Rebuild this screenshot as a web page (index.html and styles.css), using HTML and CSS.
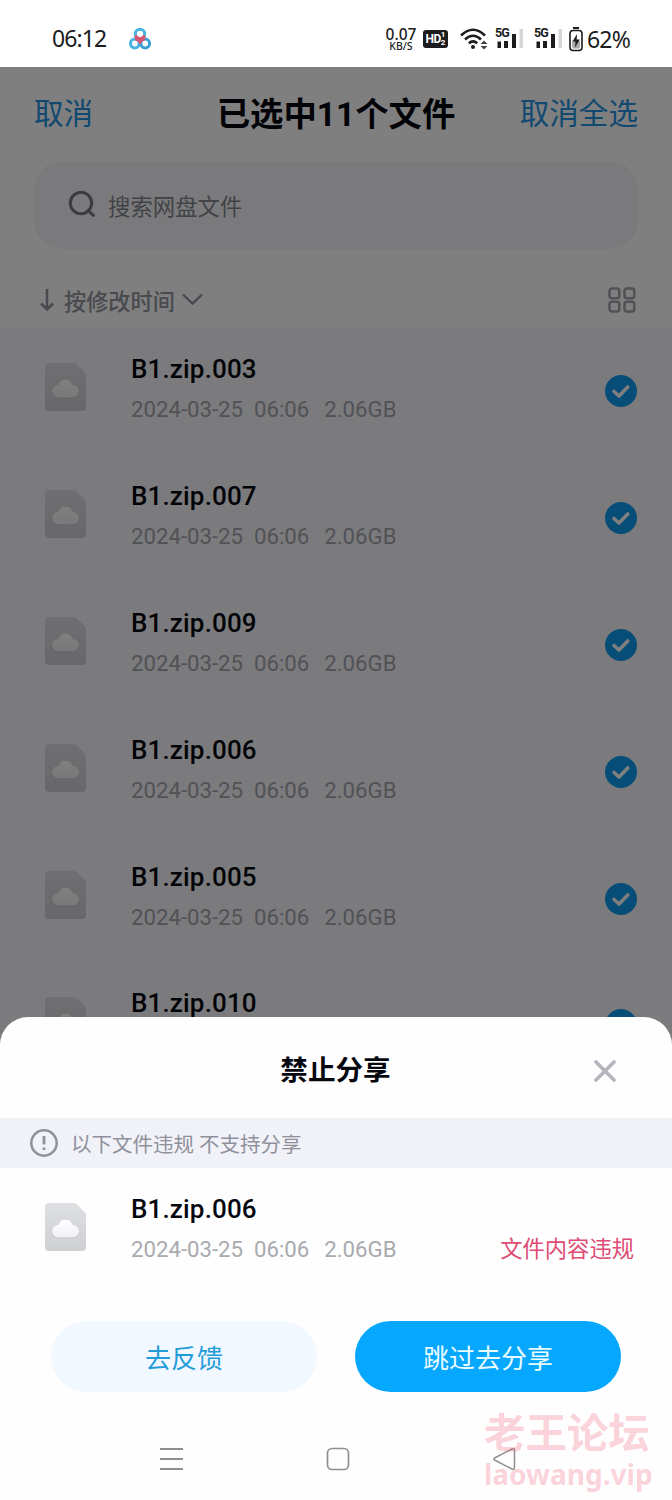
FILE: index.html
```html
<!DOCTYPE html>
<html lang="zh-CN">
<head>
    <meta charset="UTF-8">
    <meta name="viewport" content="width=device-width,initial-scale=1.0">
    <title>禁止分享</title>
    <link rel="stylesheet" href="styles.css">
</head>
<body>
    <!-- shared icons -->
    <svg class="defs" width="0" height="0">
        <defs>
            <linearGradient id="paper" x1="0" y1="0" x2="0" y2="1">
                <stop offset="0" stop-color="#dedfe2"/>
                <stop offset="1" stop-color="#cfd0d4"/>
            </linearGradient>
            <linearGradient id="cloud" x1="0" y1="0" x2="0" y2="1">
                <stop offset="0" stop-color="#ffffff"/>
                <stop offset="1" stop-color="#f0f1f5"/>
            </linearGradient>
            <symbol id="file" viewBox="0 0 41 48">
                <path d="M4 0H29Q30.500 0 31.500 1L40 9.500Q41 10.500 41 12V44Q41 48 37 48H4Q0 48 0 44V4Q0 0 4 0Z" fill="url(#paper)"/>
                <path d="M12.500 35.500A6.300 6.300 0 0 1 13.500 22.800A7.300 7.300 0 0 1 27.500 22.800A6.300 6.300 0 0 1 28 35.500Z" fill="#c2c3c8"/>
                <path d="M13 34.500A6.200 6.200 0 0 1 13.500 22A7.300 7.300 0 0 1 27.500 22A6.200 6.200 0 0 1 28 34.500Z" fill="url(#cloud)"/>
            </symbol>
            <symbol id="check" viewBox="0 0 32 32">
                <circle cx="16" cy="16" r="16" fill="#0c9bee"/>
                <path d="M9 16.500L14 21L22.800 12" fill="none" stroke="#fff" stroke-width="3.600" stroke-linecap="round" stroke-linejoin="round"/>
            </symbol>
        </defs>
    </svg>

    <div class="phone">
        <div class="status">
            <span class="clock">06:12</span>
            <svg class="app-logo" width="24" height="24" viewBox="0 0 24 24" fill="none" stroke-width="3">
                <circle cx="6.800" cy="16.500" r="4.400" stroke="#48b4e0"/>
                <circle cx="17.200" cy="16.500" r="4.400" stroke="#3b9fd3"/>
                <path d="M7 12Q10 12 12 15Q14 12 17 12" stroke="#dd5573"/>
                <circle cx="12" cy="7" r="4.700" stroke="#48b4e0"/>
                <path d="M7.500 8.500Q8.500 11.700 12 11.700T16.500 8.500" stroke="#dd5573"/>
            </svg>
            <div class="indicators">
                <div class="speed"><span>0.07</span><small>KB/S</small></div>
                <div class="hd"><b>HD</b><i><em>1</em><em>2</em></i></div>
                <svg class="wifi" width="28" height="22" viewBox="0 0 28 22" fill="none" stroke="#1c1c1e" stroke-width="2.600">
                    <path d="M1 7.500Q13 -4 25 7.500M5 11.500Q13 4 21 11.500M8.800 15.300Q13 11.500 17.200 15.300"/>
                    <circle cx="13" cy="19" r="2" fill="#1c1c1e" stroke="none"/>
                    <path d="M24 12.500L27.500 16H20.500ZM24 21.500L20.500 18H27.500Z" fill="#444" stroke="none"/>
                </svg>
                <div class="signal">
                    <b>5G</b>
                    <svg width="28" height="20" viewBox="0 0 28 20"><path d="M2.500 12.500H6V19H2.500ZM9 12H13V19H9ZM17 5H21V19H17Z" fill="#1c1c1e"/><path d="M24.500 0H28V19H24.500Z" fill="#d6d6d6"/></svg>
                </div>
                <div class="signal">
                    <b>5G</b>
                    <svg width="28" height="20" viewBox="0 0 28 20"><path d="M2.500 12.500H6V19H2.500ZM9 12H13V19H9ZM17 5H21V19H17Z" fill="#1c1c1e"/><path d="M24.500 0H28V19H24.500Z" fill="#d6d6d6"/></svg>
                </div>
                <svg class="battery" width="14" height="25" viewBox="0 0 14 25">
                    <path d="M4 1H10" stroke="#1c1c1e" stroke-width="2"/>
                    <rect x="1" y="3.500" width="12" height="20" rx="3" fill="#fff" stroke="#1c1c1e" stroke-width="1.600"/>
                    <path d="M3 14H11V19Q11 21.500 9 21.500H5Q3 21.500 3 19Z" fill="#aaa"/>
                    <path d="M8 7L3.500 14.500H6.500L6 20.500L10.800 12.500H7.700Z" fill="#1c1c1e"/>
                </svg>
                <span class="percent">62%</span>
            </div>
        </div>

        <div class="app">
            <header>
                <a class="cancel">取消</a>
                <h1>已选中11个文件</h1>
                <a class="cancel">取消全选</a>
            </header>
            <div class="search">
                <svg width="28" height="28" viewBox="0 0 28 28" fill="none" stroke="#777980" stroke-width="3">
                    <circle cx="13" cy="12" r="10.700"/>
                    <path d="M20 19.500L25.500 24.500" stroke-linecap="round"/>
                </svg>
                <span>搜索网盘文件</span>
            </div>
            <div class="sort">
                <svg width="14" height="22" viewBox="0 0 14 22" fill="none" stroke="#92949e" stroke-width="2.600">
                    <path d="M7 0V20M1 14.500L7 20.500L13 14.500"/>
                </svg>
                <span>按修改时间</span>
                <svg width="21" height="13" viewBox="0 0 21 13" fill="none" stroke="#92949e" stroke-width="2.400">
                    <path d="M1 1.500L10.500 10.500L20 1.500"/>
                </svg>
                <svg class="grid" width="28" height="26" viewBox="0 0 28 26" fill="none" stroke="#a3a4ac" stroke-width="2.600">
                    <rect x="1.500" y="1.500" width="9.800" height="9.800" rx="2.500"/>
                    <rect x="16.500" y="1.500" width="9.800" height="9.800" rx="2.500"/>
                    <rect x="1.500" y="14.700" width="9.800" height="9.800" rx="2.500"/>
                    <rect x="16.500" y="14.700" width="9.800" height="9.800" rx="2.500"/>
                </svg>
            </div>
            <ul class="list">
                <li class="file">
                    <svg class="file-icon"><use href="#file"/></svg>
                    <div class="info"><h3>B1.zip.003</h3><p><span>2024-03-25</span><span>06:06</span><span>2.06GB</span></p></div>
                    <svg class="check"><use href="#check"/></svg>
                </li>
                <li class="file">
                    <svg class="file-icon"><use href="#file"/></svg>
                    <div class="info"><h3>B1.zip.007</h3><p><span>2024-03-25</span><span>06:06</span><span>2.06GB</span></p></div>
                    <svg class="check"><use href="#check"/></svg>
                </li>
                <li class="file">
                    <svg class="file-icon"><use href="#file"/></svg>
                    <div class="info"><h3>B1.zip.009</h3><p><span>2024-03-25</span><span>06:06</span><span>2.06GB</span></p></div>
                    <svg class="check"><use href="#check"/></svg>
                </li>
                <li class="file">
                    <svg class="file-icon"><use href="#file"/></svg>
                    <div class="info"><h3>B1.zip.006</h3><p><span>2024-03-25</span><span>06:06</span><span>2.06GB</span></p></div>
                    <svg class="check"><use href="#check"/></svg>
                </li>
                <li class="file">
                    <svg class="file-icon"><use href="#file"/></svg>
                    <div class="info"><h3>B1.zip.005</h3><p><span>2024-03-25</span><span>06:06</span><span>2.06GB</span></p></div>
                    <svg class="check"><use href="#check"/></svg>
                </li>
                <li class="file">
                    <svg class="file-icon"><use href="#file"/></svg>
                    <div class="info"><h3>B1.zip.010</h3></div>
                    <svg class="check"><use href="#check"/></svg>
                </li>
            </ul>
            <div class="mask"></div>
        </div>

        <section class="sheet">
            <div class="sheet-head">
                <h2>禁止分享</h2>
                <svg class="close" width="22" height="22" viewBox="0 0 22 22" fill="none" stroke="#b3b4bc" stroke-width="3.600" stroke-linecap="round">
                    <path d="M2 2L20 20M20 2L2 20"/>
                </svg>
            </div>
            <div class="notice">
                <svg width="28" height="28" viewBox="0 0 28 28" fill="none" stroke="#8f909c" stroke-width="2.500">
                    <circle cx="14" cy="14" r="12.700"/>
                    <path d="M14 7V15.500M14 18.500V21" stroke-width="2.800"/>
                </svg>
                <span>以下文件违规 不支持分享</span>
            </div>
            <div class="file">
                <svg class="file-icon"><use href="#file"/></svg>
                <div class="info"><h3>B1.zip.006</h3><p><span>2024-03-25</span><span>06:06</span><span>2.06GB</span></p></div>
                <span class="reason">文件内容违规</span>
            </div>
            <div class="buttons">
                <button class="feedback">去反馈</button>
                <button class="skip">跳过去分享</button>
            </div>
            <nav>
                <svg width="24" height="24" viewBox="0 0 24 24" stroke="#8f8f92" stroke-width="1.800"><path d="M0 2H23M0 12H23M0 22H23"/></svg>
                <svg width="24" height="24" viewBox="0 0 24 24" fill="none" stroke="#8f8f92" stroke-width="1.700"><rect x="1.500" y="1.500" width="21" height="21" rx="4.500"/></svg>
                <svg width="24" height="24" viewBox="0 0 24 24" fill="none" stroke="#8f8f92" stroke-width="1.500" stroke-linejoin="round"><path d="M2.500 11Q1 12 2.500 13L20 22Q22.500 23 22.500 20.500V3.500Q22.500 1 20 2Z"/></svg>
            </nav>
            <div class="watermark">
                <b>老王论坛</b>
                <span>laowang.vip</span>
            </div>
        </section>
    </div>
</body>
</html>
```

FILE: styles.css
```css
*{
    margin: 0;
    padding: 0;
    box-sizing: border-box;
}
body{
    font-family: Roboto, "Noto Sans CJK SC", sans-serif;
    background: #fff;
}
ul{
    list-style: none;
}
svg{
    display: block;
    flex-shrink: 0;
}
.defs{
    position: absolute;
}
.phone{
    position: relative;
    width: 672px;
    height: 1500px;
    overflow: hidden;
    display: flex;
    flex-direction: column;
}

/* status bar */
.status{
    height: 67px;
    flex-shrink: 0;
    padding: 11px 42px 0 52px;
    display: flex;
    align-items: center;
    color: #1c1c1e;
    font-family: "Noto Sans", sans-serif;
}
.clock{
    width: 76px;
    font-size: 23px;
    line-height: 24px;
    letter-spacing: -0.9px;
    margin-top: -2px;
}
.indicators{
    margin-left: auto;
    display: flex;
    align-items: center;
}
.speed{
    width: 32px;
    margin-right: 6px;
    display: flex;
    flex-direction: column;
    align-items: center;
    font-weight: 500;
}
.speed span{
    font-size: 15.5px;
    line-height: 13px;
}
.speed small{
    font-size: 10.5px;
    line-height: 10px;
}
.hd{
    width: 25px;
    height: 18px;
    border-radius: 3px;
    background: #1c1c1e;
    color: #fff;
    display: flex;
    align-items: center;
    justify-content: center;
    font-family: Roboto, sans-serif;
    margin-right: 12px;
}
.hd b{
    font-size: 12px;
    letter-spacing: -0.5px;
}
.hd i{
    display: flex;
    flex-direction: column;
    font-style: normal;
}
.hd em{
    font-size: 8px;
    line-height: 8px;
    font-style: normal;
    font-weight: bold;
}
.wifi{
    margin-right: 7px;
}
.signal{
    display: grid;
    margin-right: 11px;
}
.signal b, .signal svg{
    grid-area: 1 / 1;
}
.signal b{
    font: bold 12.5px/12px Roboto, sans-serif;
    letter-spacing: -1px;
    margin-top: -2px;
}
.battery{
    margin: 0 4px 0 -4px;
}
.percent{
    font-size: 23px;
    line-height: 24px;
    letter-spacing: -0.8px;
    margin-top: -1px;
}

/* file list behind the sheet */
.app{
    position: relative;
    flex: 1;
    min-height: 0;
    overflow: hidden;
}
.mask{
    position: absolute;
    inset: 0;
    background: rgba(0, 0, 0, 0.5);
}
header{
    height: 94px;
    padding: 0 34px 6px;
    display: grid;
    grid-template-columns: 1fr auto 1fr;
    align-items: center;
}
.cancel{
    font-size: 29.6px;
    color: #2492e0;
}
.cancel:last-child{
    text-align: right;
}
h1{
    font-size: 33.4px;
    color: #05070f;
    font-weight: bold;
}
.search{
    height: 88px;
    margin: 0 34px;
    padding-left: 34px;
    border-radius: 28px;
    background: #f5f5f9;
    display: flex;
    align-items: center;
    gap: 12px;
    font-size: 22.4px;
    color: #83858e;
}
.sort{
    height: 79px;
    padding: 22px 36px 0 40px;
    display: flex;
    align-items: center;
    font-size: 22.2px;
    font-weight: 500;
    color: #92949e;
}
.sort span{
    margin: 0 7px 0 10px;
}
.grid{
    margin-left: auto;
}
.list{
    background: #f6f7fa;
}
.file{
    height: 126.9px;
    padding: 21px 35px 0 45px;
    display: flex;
}
.file-icon{
    width: 41px;
    height: 48px;
    margin-top: 14px;
}
.info{
    margin-left: 45px;
    flex: 1;
}
.info h3{
    font-size: 26px;
    line-height: 40px;
    letter-spacing: 0.15px;
    font-weight: 500;
    color: #05070f;
}
.info p{
    display: flex;
    font-size: 22.2px;
    line-height: 41px;
    color: #a9aaae;
}
.info p span:nth-child(2){
    margin: 0 15px 0 11px;
}
.list .info p{
    color: #a3a5ac;
}
.check{
    width: 32px;
    height: 32px;
    margin-top: 26px;
}

/* bottom sheet */
.sheet{
    position: absolute;
    left: 0;
    right: 0;
    bottom: 0;
    height: 483px;
    border-radius: 28px 28px 0 0;
    background: #fefefe;
}
.sheet-head{
    height: 101px;
    padding: 0 56px 0 55px;
    display: grid;
    grid-template-columns: 1fr auto 1fr;
    align-items: center;
}
.sheet-head h2{
    grid-column: 2;
    font-size: 27.6px;
    color: #05070f;
}
.close{
    justify-self: end;
    margin-top: 6px;
}
.notice{
    height: 50px;
    padding-left: 30px;
    background: #f1f2f7;
    display: flex;
    align-items: center;
    gap: 13px;
    font-size: 20.5px;
    color: #8f909c;
}
.sheet .file{
    height: 127px;
    padding-right: 38px;
}
.reason{
    margin-top: 42px;
    font-size: 22.3px;
    line-height: 36px;
    color: #de4c74;
}
.buttons{
    display: flex;
    gap: 38px;
    padding: 26px 51px 0 51px;
}
.buttons button{
    flex: 1;
    height: 71px;
    border: none;
    border-radius: 36px;
    font-family: inherit;
    font-size: 26px;
    cursor: pointer;
}
.feedback{
    background: #f2f8ff;
    color: #229cd8;
}
.skip{
    background: #06a7ff;
    color: #e8fbff;
}
nav{
    padding: 55px 156px 0 160px;
    display: flex;
    justify-content: space-between;
}
.watermark{
    position: absolute;
    left: 484px;
    top: 394px;
    display: flex;
    flex-direction: column;
    color: rgba(240, 60, 95, 0.24);
}
.watermark b{
    font-size: 41.4px;
    line-height: 46px;
}
.watermark span{
    font: bold 28px/34px "Noto Sans", sans-serif;
}
```
